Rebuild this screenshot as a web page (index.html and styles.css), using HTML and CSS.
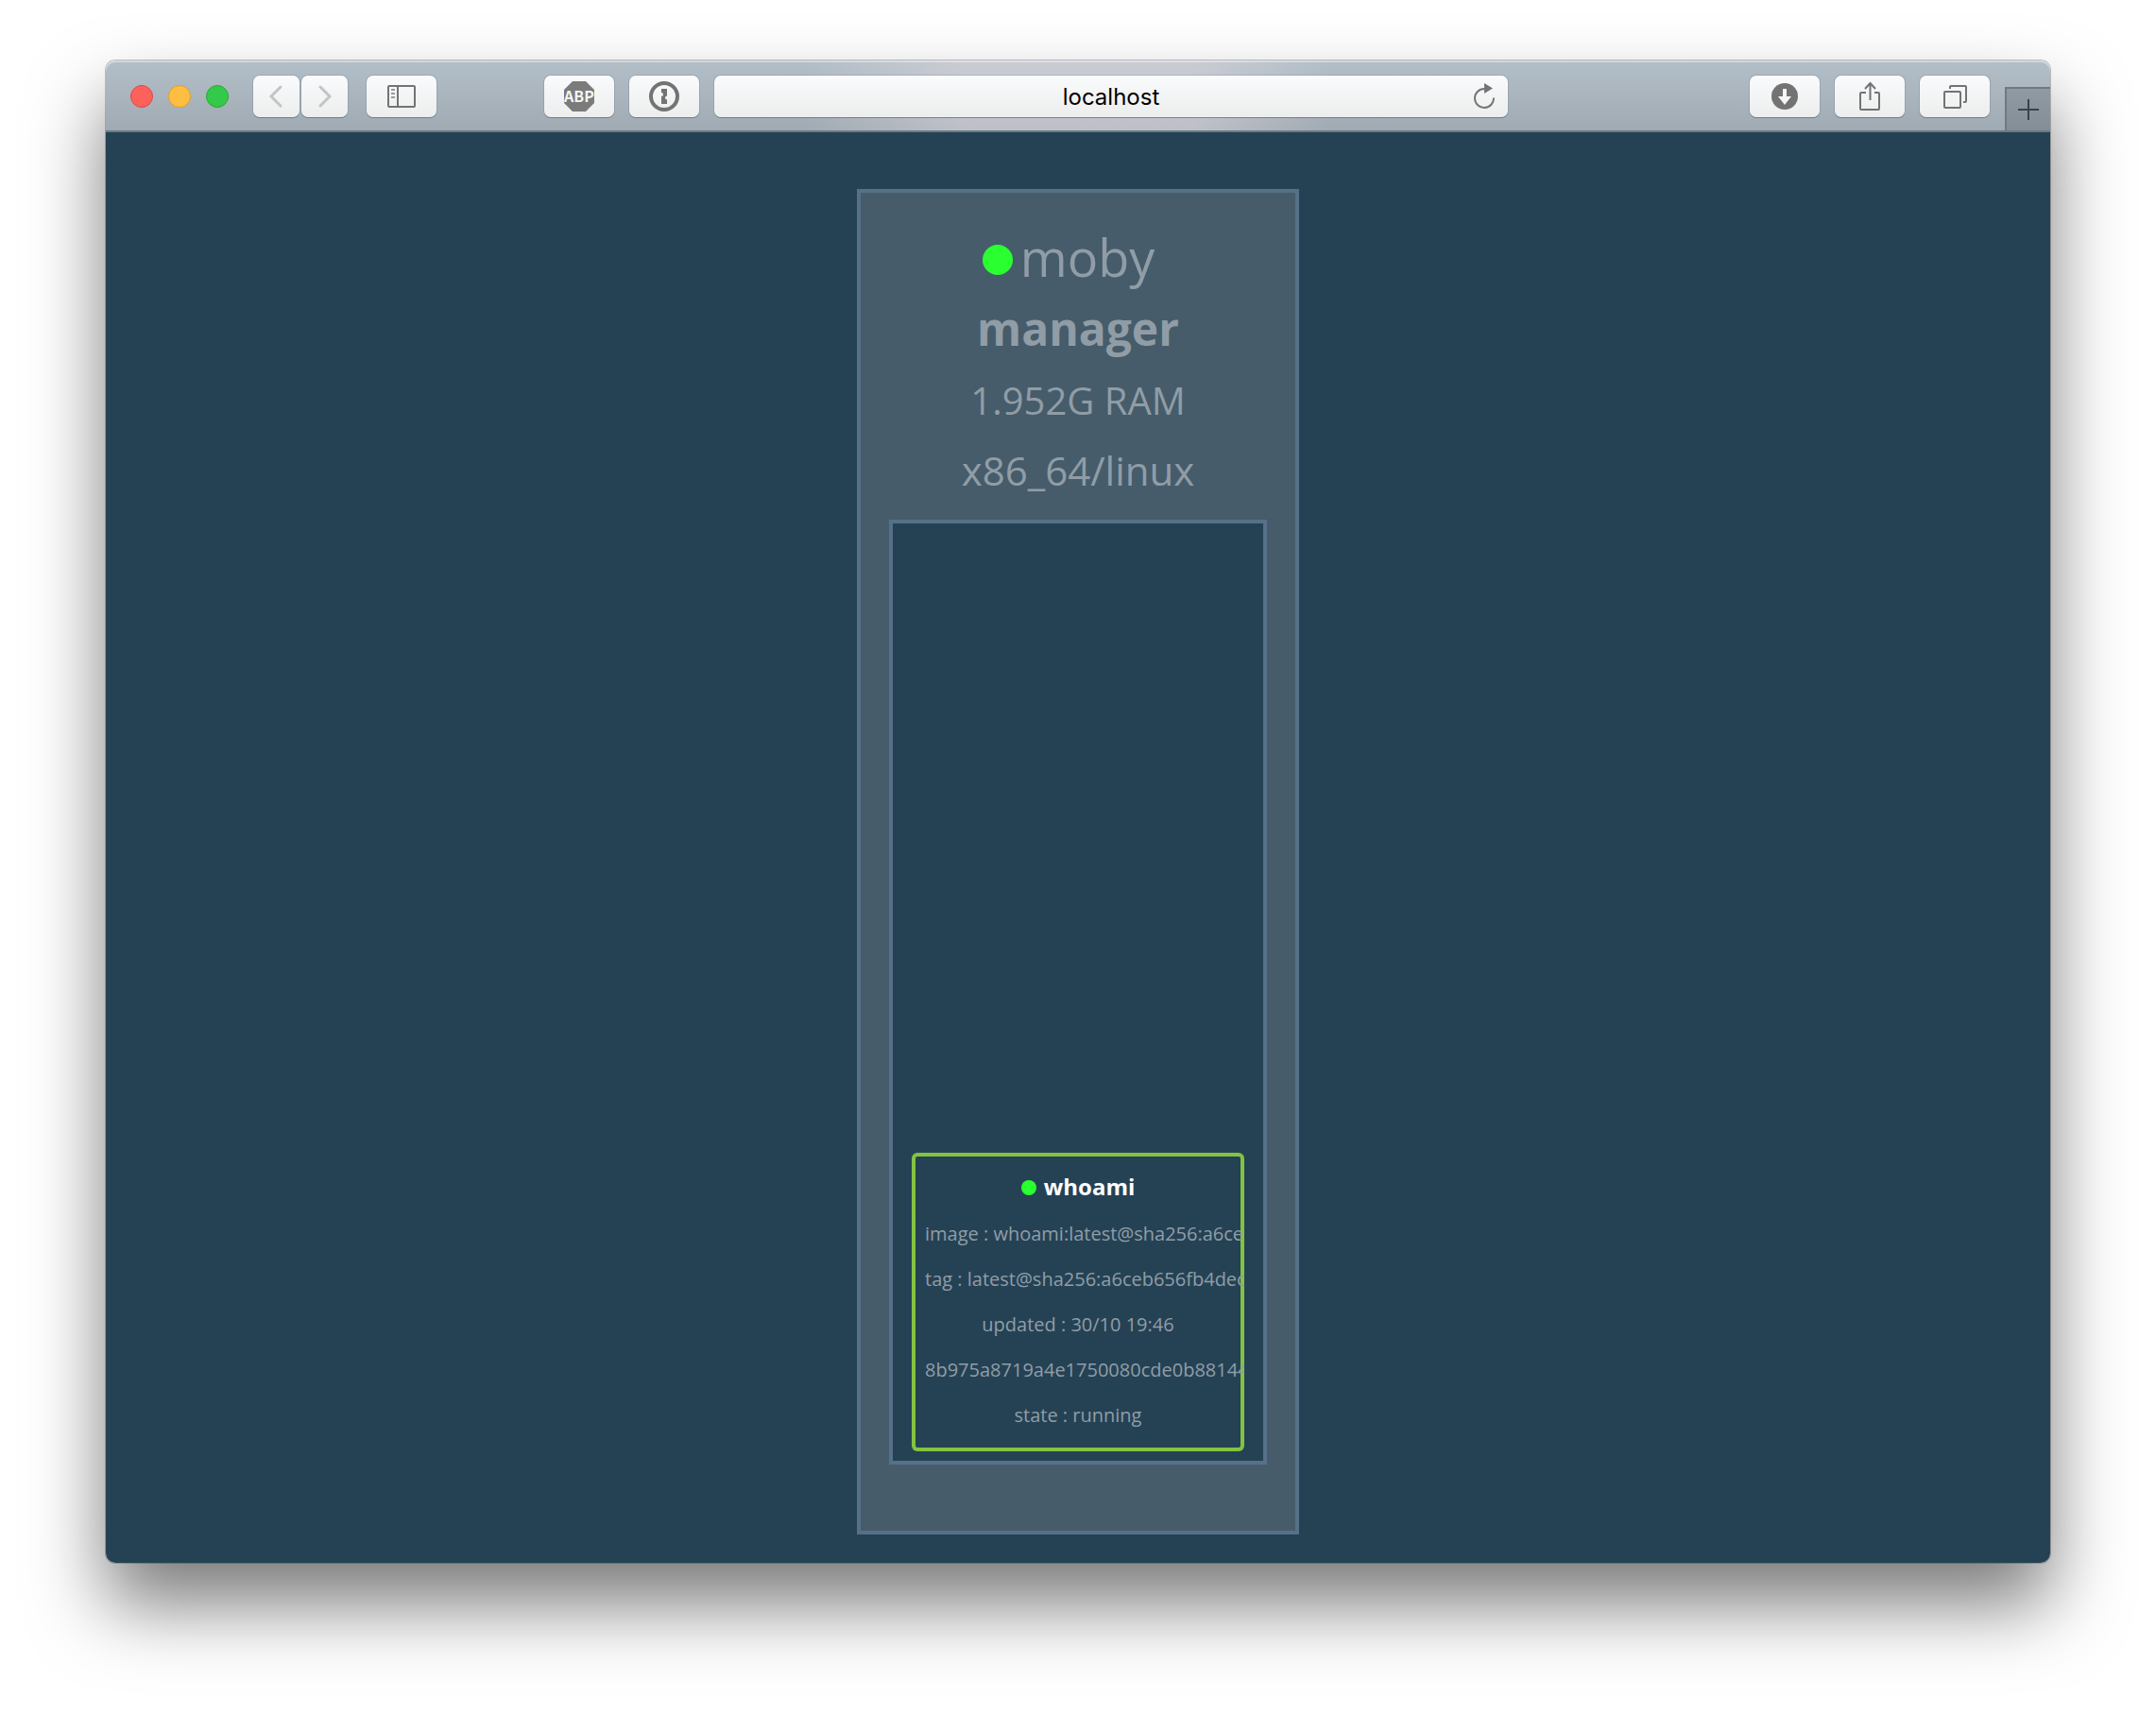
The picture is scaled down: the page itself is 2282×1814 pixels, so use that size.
FILE: index.html
```html
<!DOCTYPE html>
<html lang="en">
<head>
<meta charset="utf-8">
<title>localhost</title>
<link rel="stylesheet" href="styles.css">
</head>
<body>
<div class="window">
  <header class="toolbar">
    <div class="lights">
      <button class="light light-close" aria-label="Close"></button>
      <button class="light light-min" aria-label="Minimize"></button>
      <button class="light light-zoom" aria-label="Zoom"></button>
    </div>
    <div class="history">
      <button class="tool tool-nav" aria-label="Back">
        <svg width="48" height="44" viewBox="0 0 48 44"><path d="M28 12 18 22l10 10" fill="none" stroke="#c4c4c4" stroke-width="3" stroke-linecap="round"/></svg>
      </button>
      <button class="tool tool-nav" aria-label="Forward">
        <svg width="48" height="44" viewBox="0 0 48 44"><path d="M19 12l10 10-10 10" fill="none" stroke="#c4c4c4" stroke-width="3" stroke-linecap="round"/></svg>
      </button>
    </div>
    <button class="tool" aria-label="Show sidebar">
      <svg width="30" height="24" viewBox="0 0 30 24"><path d="M11 1v22" stroke="#737373" stroke-width="2"/><rect x="1" y="1" width="28" height="22" rx="1" fill="none" stroke="#737373" stroke-width="2"/><path d="M4 5h4M4 9h4M4 13h4" stroke="#9a9a9a" stroke-width="2"/></svg>
    </button>
    <div class="space-start"></div>
    <div class="group">
      <button class="tool" aria-label="Adblock Plus">
        <svg width="32" height="32" viewBox="0 0 32 32"><path d="M9 0h14l9 9v14l-9 9H9l-9-9V9z" fill="#7b7b7b"/><text x="16" y="22" class="abp" text-anchor="middle">ABP</text></svg>
      </button>
      <button class="tool" aria-label="1Password">
        <svg width="32" height="32" viewBox="0 0 32 32"><circle cx="16" cy="16" r="14" fill="none" stroke="#737373" stroke-width="4"/><path d="M13 8h6v7.500a2 2 0 0 0 0 4V24h-6v-8a2 2 0 0 0 0-4z" fill="#737373"/></svg>
      </button>
    </div>
    <div class="address">
      <input class="url" type="text" value="localhost" aria-label="Address">
      <button class="reload" aria-label="Reload">
        <svg width="24" height="28" viewBox="0 0 24 28"><path d="M11 6a10 10 0 1 0 10 9.500" fill="none" stroke="#757575" stroke-width="2"/><path d="M11 0l9 5.500-9 5.500z" fill="#757575"/></svg>
      </button>
    </div>
    <div class="space-end"></div>
    <div class="group">
      <button class="tool" aria-label="Downloads">
        <svg width="28" height="28" viewBox="0 0 28 28"><circle cx="14" cy="14" r="14" fill="#737373"/><path d="M12 6h4v8h5l-7 9-7-9h5z" fill="#f4f5f5"/></svg>
      </button>
      <button class="tool" aria-label="Share">
        <svg width="24" height="32" viewBox="0 0 24 32" fill="none" stroke="#737373" stroke-width="2"><path d="M8 12H3a1 1 0 0 0-1 1v16a1 1 0 0 0 1 1h18a1 1 0 0 0 1-1V13a1 1 0 0 0-1-1h-4"/><path d="M12.500 20V2M7 8l5.500-6L18 8"/></svg>
      </button>
      <button class="tool" aria-label="Show all tabs">
        <svg width="26" height="26" viewBox="0 0 26 26" fill="none" stroke="#737373" stroke-width="2"><rect x="2" y="8" width="17" height="17" rx="1"/><path d="M8 5V3a1 1 0 0 1 1-1h15a1 1 0 0 1 1 1v15a1 1 0 0 1-1 1h-2"/></svg>
      </button>
    </div>
    <button class="new-tab" aria-label="New tab">
      <svg width="22" height="22" viewBox="0 0 22 22"><path d="M11 0v22M0 11h22" stroke="#39434b" stroke-width="2"/></svg>
    </button>
  </header>
  <main class="page">
    <section class="node">
      <h1 class="node-name"><span class="dot dot-large"></span>moby</h1>
      <p class="node-role">manager</p>
      <p class="node-ram">1.952G RAM</p>
      <p class="node-arch">x86_64/linux</p>
      <div class="tasks">
        <article class="task">
          <h2 class="task-name"><span class="dot dot-small"></span>whoami</h2>
          <ul class="task-info">
            <li>image : whoami:latest@sha256:a6ceb656fb4dec</li>
            <li>tag : latest@sha256:a6ceb656fb4dec</li>
            <li>updated : 30/10 19:46</li>
            <li>8b975a8719a4e1750080cde0b88144</li>
            <li>state : running</li>
          </ul>
        </article>
      </div>
    </section>
  </main>
</div>
</body>
</html>
```
FILE: styles.css
```css
* { box-sizing: border-box; }

body {
  margin: 0;
  padding: 64px 112px 160px;
  background: #fff;
  font-family: "Open Sans", sans-serif;
  overflow-x: hidden;
}

h1, h2, p, ul { margin: 0; padding: 0; }

button, input { border: 0; padding: 0; font: inherit; }

svg { display: block; }

.window {
  border-radius: 10px;
  box-shadow: 0 0 0 1px rgba(0, 0, 0, .22), 0 44px 80px rgba(0, 0, 0, .52);
}

/* Browser toolbar */
.toolbar {
  display: flex;
  align-items: center;
  height: 76px;
  padding: 2px 0 0 26px;
  border-bottom: 2px solid #6d7a84;
  border-radius: 10px 10px 0 0;
  background:
    linear-gradient(90deg, rgba(232, 222, 226, 0) 36%, rgba(232, 222, 226, .42) 44%, rgba(232, 222, 226, .42) 56%, rgba(232, 222, 226, 0) 63%),
    linear-gradient(#b3bfc8, #a0aab3);
  box-shadow: inset 0 2px 0 rgba(255, 255, 255, .4);
}

.lights { display: flex; gap: 16px; margin-right: 26px; }

.light {
  width: 24px;
  height: 24px;
  border-radius: 50%;
}

.light-close { background: #fc615c; border: 1px solid #df4744; }
.light-min { background: #fdbe41; border: 1px solid #de9f34; }
.light-zoom { background: #34c94a; border: 1px solid #26aa35; }

.history { display: flex; gap: 2px; margin-right: 20px; }

.group { display: flex; gap: 16px; }

.tool, .address {
  display: flex;
  align-items: center;
  justify-content: center;
  height: 44px;
  border-radius: 7px;
  background: linear-gradient(#fafbfc, #eceded);
  box-shadow: 0 0 0 1px rgba(110, 130, 145, .3), 0 1px 0 rgba(80, 92, 102, .6);
}

.tool { width: 74px; }
.tool-nav { width: 49px; }

.abp {
  fill: #f4f5f5;
  font: 700 16px "Liberation Sans Narrow", "Noto Sans CJK SC", sans-serif;
}

.space-start { flex: 114 1 0; }
.space-end { flex: 256 1 0; }

.address { flex: 828 1 0; margin-left: 16px; padding-right: 12px; }

.url {
  flex: 1;
  min-width: 0;
  padding-left: 36px;
  background: none;
  color: #000;
  font: 24px Inter, sans-serif;
  text-align: center;
}

.reload { background: none; }

.new-tab {
  display: flex;
  align-items: center;
  justify-content: center;
  align-self: flex-end;
  width: 48px;
  height: 46px;
  margin-left: 16px;
  border: solid #6d7a84;
  border-width: 2px 0 0 2px;
  background: linear-gradient(#8f9aa3, #848e97);
}

/* Swarm visualizer */
.page {
  display: flex;
  justify-content: center;
  padding: 60px 30px 30px;
  border-radius: 0 0 10px 10px;
  background: #254255;
}

.node {
  width: 468px;
  padding: 30px 30px 70px;
  border: 4px solid #567187;
  background: #465c6b;
  color: #909da6;
  text-align: center;
}

.node-name {
  height: 76px;
  padding-right: 20px;
  font-size: 54px;
  font-weight: 400;
  line-height: 76px;
}

.node-role { font-size: 48px; font-weight: 700; line-height: 76px; }
.node-ram { font-size: 40px; line-height: 76px; }
.node-arch { font-size: 42px; line-height: 72px; }

.dot {
  display: inline-block;
  border-radius: 50%;
  background: #2aff2f;
}

.dot-large { width: 32px; height: 32px; margin: 0 8px 2px 0; }
.dot-small { width: 16px; height: 16px; margin-right: 8px; }

.tasks {
  display: flex;
  flex-direction: column;
  justify-content: flex-end;
  min-height: 1000px;
  margin-top: 16px;
  padding: 20px 20px 10px;
  border: 4px solid #567187;
  background: #254255;
}

/* The frame is an inset shadow, so long lines run over it and end at its outer edge */
.task {
  padding: 12px 14px 14px;
  border-radius: 6px;
  box-shadow: inset 0 0 0 4px #84c340;
  overflow: hidden;
}

.task-name {
  height: 48px;
  margin-bottom: 2px;
  color: #fff;
  font-size: 24px;
  line-height: 48px;
}

.task-info {
  font-size: 20px;
  line-height: 48px;
  list-style: none;
  white-space: nowrap;
}
```
